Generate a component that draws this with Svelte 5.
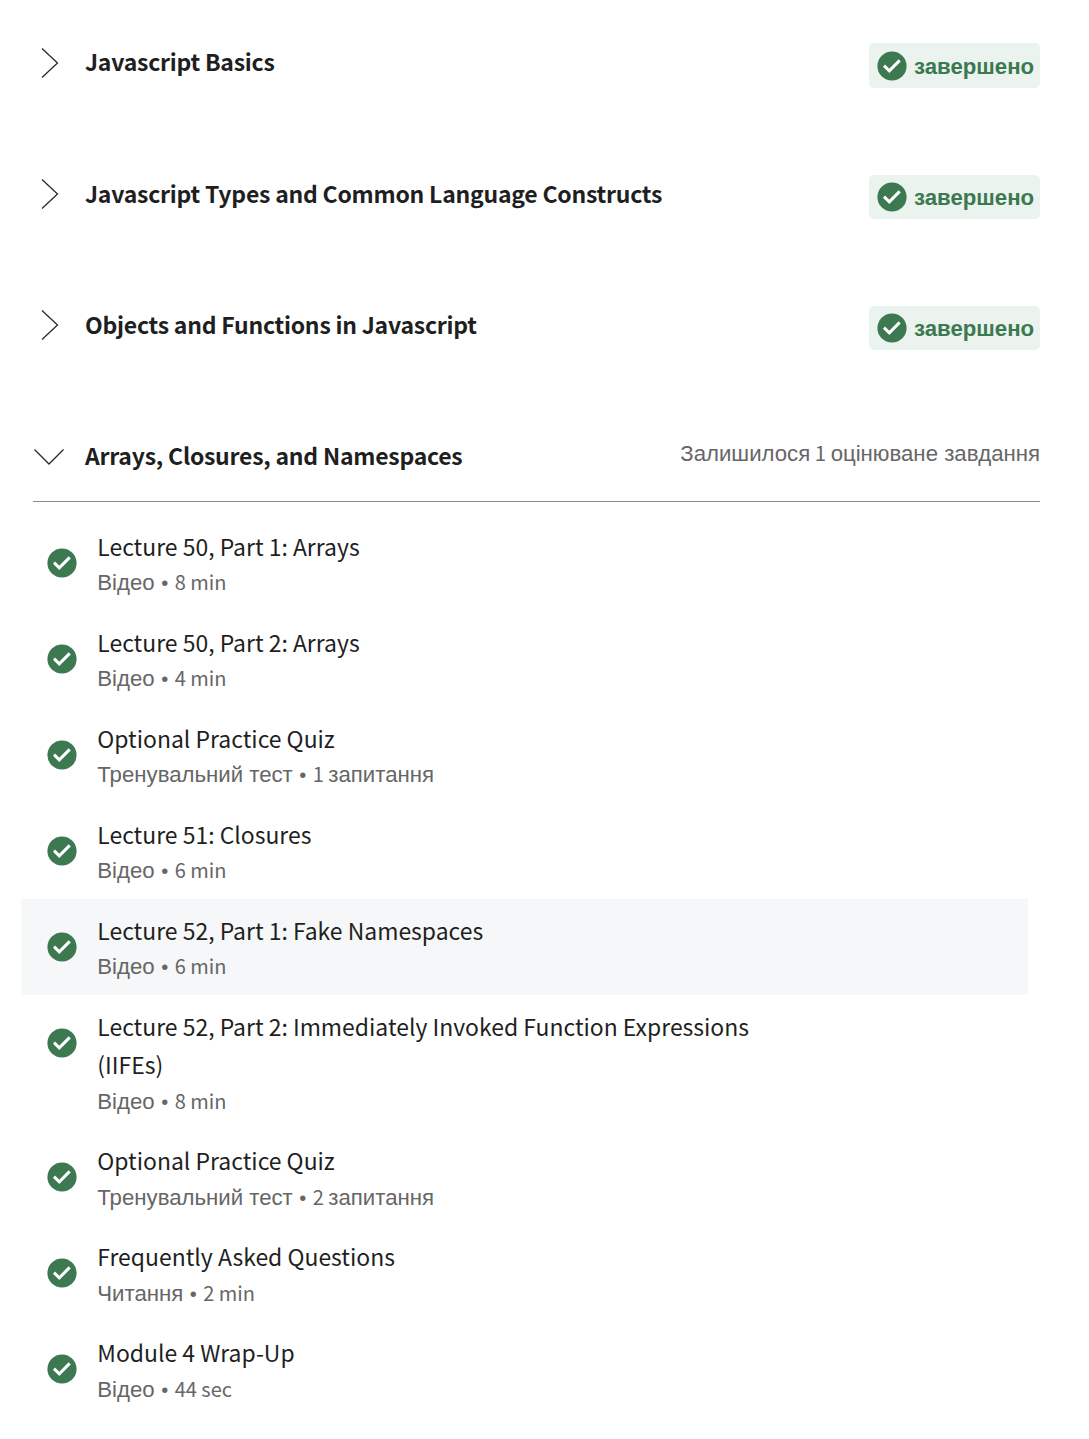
<script>
  const modules = ['Javascript Basics', 'Javascript Types and Common Language Constructs', 'Objects and Functions in Javascript'];
  const lessons = [
    { title: 'Lecture 50, Part 1: Arrays', kind: 'Відео', amount: '8 min' },
    { title: 'Lecture 50, Part 2: Arrays', kind: 'Відео', amount: '4 min' },
    { title: 'Optional Practice Quiz', kind: 'Тренувальний тест', amount: '1', unit: 'запитання' },
    { title: 'Lecture 51: Closures', kind: 'Відео', amount: '6 min' },
    { title: 'Lecture 52, Part 1: Fake Namespaces', kind: 'Відео', amount: '6 min', active: true },
    { title: 'Lecture 52, Part 2: Immediately Invoked Function Expressions (IIFEs)', kind: 'Відео', amount: '8 min', long: true },
    { title: 'Optional Practice Quiz', kind: 'Тренувальний тест', amount: '2', unit: 'запитання' },
    { title: 'Frequently Asked Questions', kind: 'Читання', amount: '2 min' },
    { title: 'Module 4 Wrap-Up', kind: 'Відео', amount: '44 sec' }
  ];
</script>

{#snippet check()}
  <svg class="check" viewBox="0 0 30 30" aria-hidden="true">
    <circle cx="15" cy="15" r="14.6" fill="#3c7850" />
    <path d="M7 14.7 L12.3 19.8 L22.7 9.4" fill="none" stroke="#fff" stroke-width="3" />
  </svg>
{/snippet}

<main>
  {#each modules as name}
    <section class="module">
      <svg class="chevron" viewBox="0 0 32 32" aria-hidden="true"><path d="M9 1.5 L24.5 16 L9 30.5" /></svg>
      <h2>{name}</h2>
      <div class="badge">{@render check()}<span>завершено</span></div>
    </section>
  {/each}

  <section class="module open">
    <svg class="chevron" viewBox="0 0 32 32" aria-hidden="true"><path d="M1.5 8.5 L16 23 L30.5 8.5" /></svg>
    <h2>Arrays, Closures, and Namespaces</h2>
    <p class="remaining"><span class="cyr">Залишилося</span> 1 <span class="cyr">оцінюване завдання</span></p>
  </section>

  <ul>
    {#each lessons as item}
      <li class:active={item.active} class:long={item.long}>
        {@render check()}
        <div class="text">
          <div class="title">{item.title}</div>
          <div class="meta"><span class="cyr">{item.kind}</span><span class="dot">•</span>{item.amount}{#if item.unit}{' '}<span class="cyr">{item.unit}</span>{/if}</div>
        </div>
      </li>
    {/each}
  </ul>
</main>

<style>
  :global(body) { background: #fff; }
  main {
    box-sizing: border-box;
    width: 1089px;
    height: 1439px;
    padding: 0 49px 0 33px;
    overflow: hidden;
    color: #1f1f1f;
    font-family: "Noto Sans CJK SC", "Liberation Sans", sans-serif;
  }
  .module {
    box-sizing: border-box;
    display: flex;
    height: 131.3px;
    padding-top: 43.25px;
    align-items: flex-start;
  }
  .chevron { width: 32px; height: 32px; margin-top: 3.5px; flex: none; }
  .chevron path { fill: none; stroke: #2a2a2a; stroke-width: 1.3; }
  h2 { margin: -2px 0 0 20px; font-size: 23px; line-height: 40px; font-weight: 700; letter-spacing: -0.24px; white-space: nowrap; }
  .check { display: block; width: 30px; height: 30px; flex: none; }
  .badge {
    box-sizing: border-box;
    display: flex;
    align-items: center;
    width: 171px;
    height: 44.4px;
    margin-left: auto;
    padding: 0.6px 0 0 8px;
    gap: 7px;
    border-radius: 5px;
    background: #eaf3ee;
    color: #3c7850;
    font: 700 22.2px/30px "Liberation Sans", sans-serif;
  }
  .badge span { padding-top: 2px; }
  .open { height: 108px; border-bottom: 1px solid #8c8c8c; }
  .remaining { margin: -3.6px 0 0 auto; font-size: 20.4px; line-height: 36px; color: #666; white-space: nowrap; }
  .cyr { font-family: "Liberation Sans", sans-serif; font-size: 22.2px; }
  .dot { display: inline-block; width: 20px; text-align: center; font-family: "Liberation Sans", sans-serif; }
  ul { list-style: none; margin: 13.1px 12px 0 -12px; padding: 0; }
  li { box-sizing: border-box; display: flex; height: 96px; padding: 13px 0 0 26px; }
  li.long { height: 134.4px; }
  li.active { background: #f5f7f8; }
  li .check { margin-top: 20px; }
  .text { width: 690px; margin: -1px 0 0 20.3px; }
  .title { font-size: 22.95px; line-height: 38px; }
  .meta { margin-top: 0.2px; font-size: 20px; line-height: 33px; color: #666; }
  .long .meta { margin-top: 0.9px; }
</style>
